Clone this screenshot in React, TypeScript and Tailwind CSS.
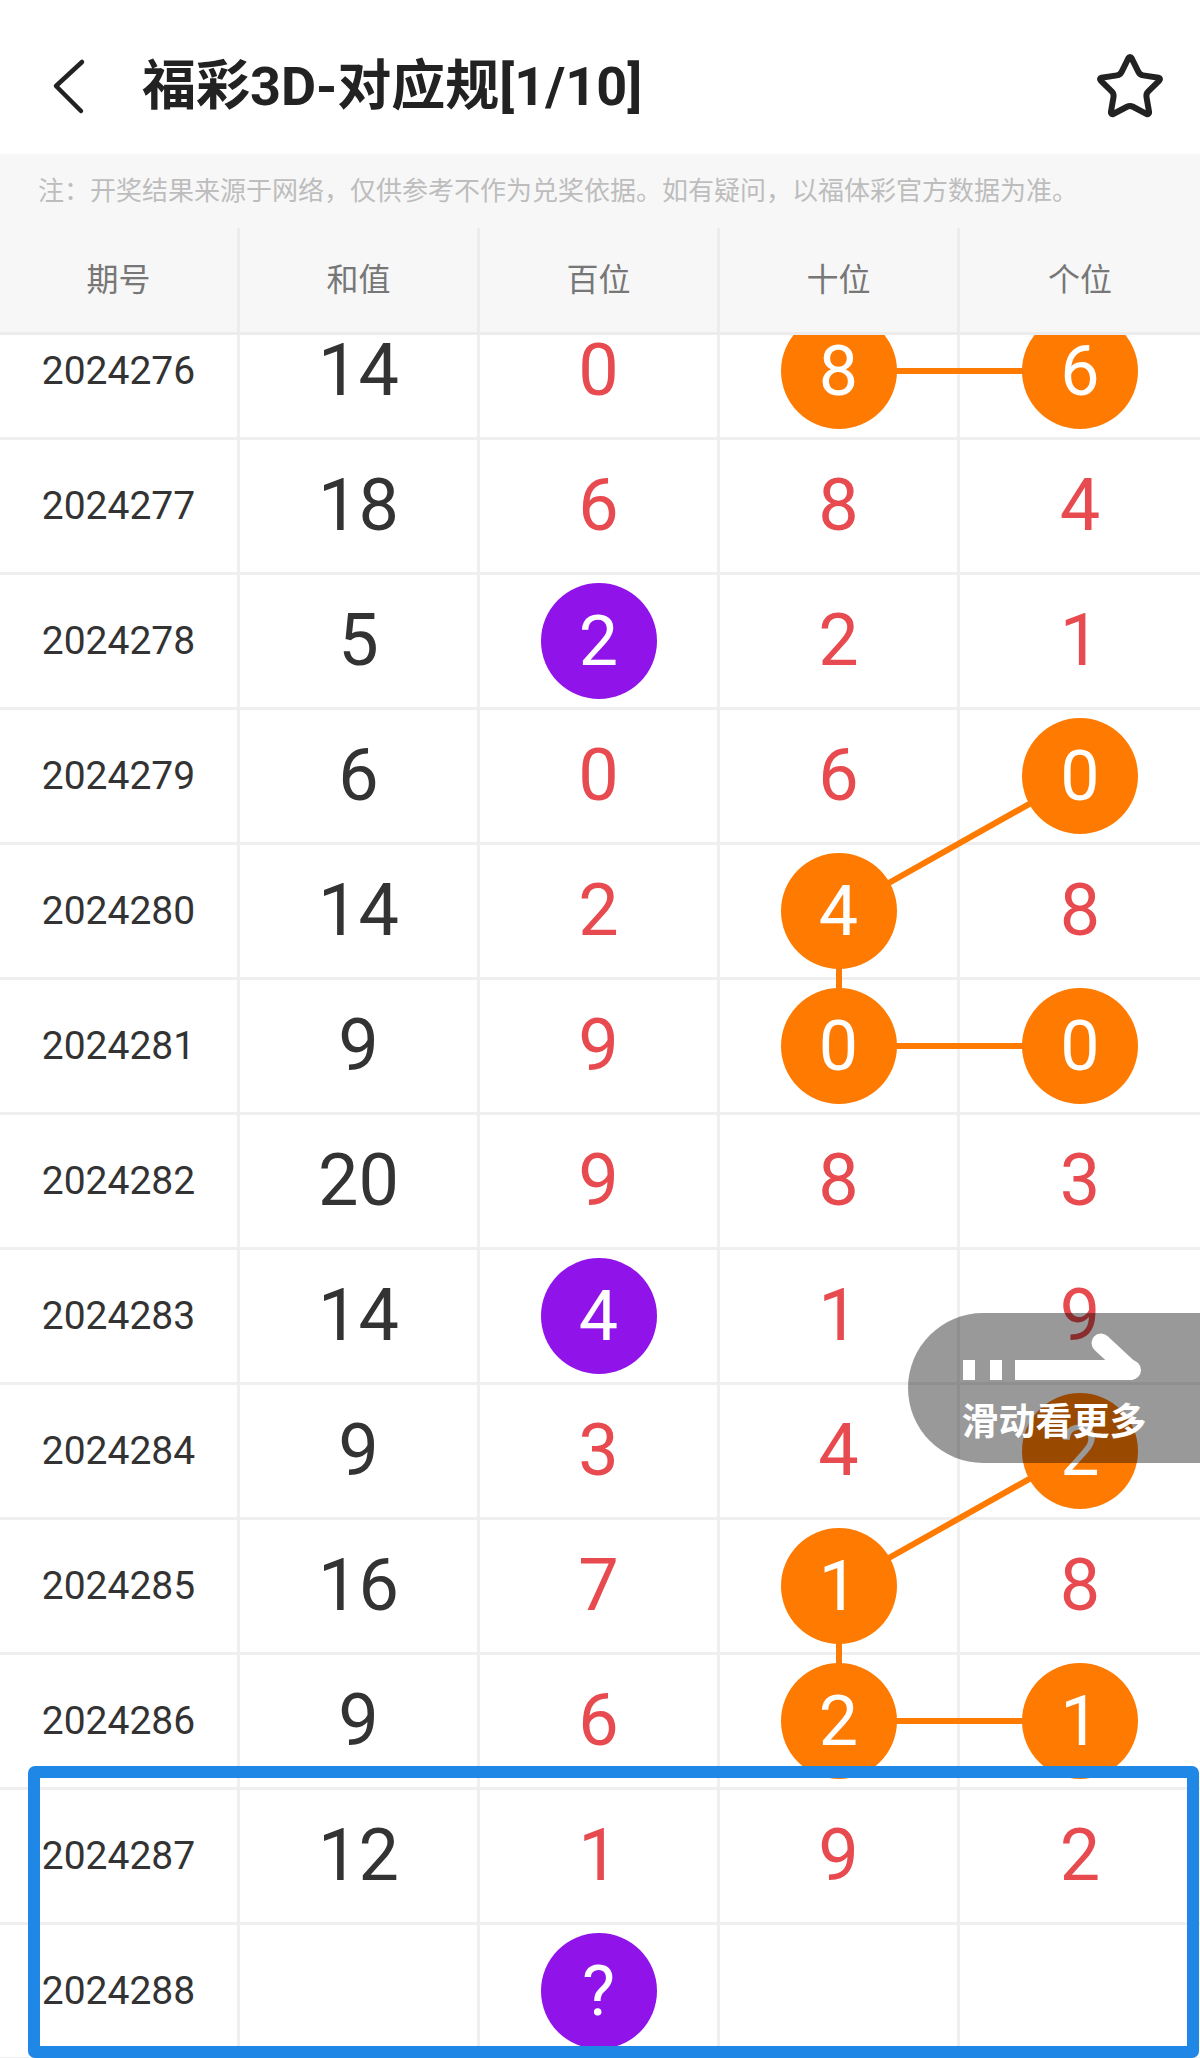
import React from 'react'

type Kind = 'r' | 'o' | 'p' | ''

interface Row {
  no: string
  sum: string
  digits: [string, Kind][]
}

const rows: Row[] = [
  { no: '2024276', sum: '14', digits: [['0', 'r'], ['8', 'o'], ['6', 'o']] },
  { no: '2024277', sum: '18', digits: [['6', 'r'], ['8', 'r'], ['4', 'r']] },
  { no: '2024278', sum: '5', digits: [['2', 'p'], ['2', 'r'], ['1', 'r']] },
  { no: '2024279', sum: '6', digits: [['0', 'r'], ['6', 'r'], ['0', 'o']] },
  { no: '2024280', sum: '14', digits: [['2', 'r'], ['4', 'o'], ['8', 'r']] },
  { no: '2024281', sum: '9', digits: [['9', 'r'], ['0', 'o'], ['0', 'o']] },
  { no: '2024282', sum: '20', digits: [['9', 'r'], ['8', 'r'], ['3', 'r']] },
  { no: '2024283', sum: '14', digits: [['4', 'p'], ['1', 'r'], ['9', 'r']] },
  { no: '2024284', sum: '9', digits: [['3', 'r'], ['4', 'r'], ['2', 'o']] },
  { no: '2024285', sum: '16', digits: [['7', 'r'], ['1', 'o'], ['8', 'r']] },
  { no: '2024286', sum: '9', digits: [['6', 'r'], ['2', 'o'], ['1', 'o']] },
  { no: '2024287', sum: '12', digits: [['1', 'r'], ['9', 'r'], ['2', 'r']] },
  { no: '2024288', sum: '', digits: [['?', 'p'], ['', ''], ['', '']] },
]

// [row, col] pairs joined by the orange trend line
const links: [number, number, number, number][] = [
  [0, 3, 0, 4],
  [3, 4, 4, 3],
  [4, 3, 5, 3],
  [5, 3, 5, 4],
  [8, 4, 9, 3],
  [9, 3, 10, 3],
  [10, 3, 10, 4],
]

const ROW_H = 135
const COL_W = 240
const font = { fontFamily: 'Roboto, "Noto Sans CJK SC", sans-serif' }

function DigitCell({ value, kind }: { value: string; kind: Kind }) {
  if (kind === 'o' || kind === 'p') {
    return (
      <div
        className={
          'relative z-[2] flex h-[116px] w-[116px] items-center justify-center rounded-full text-[70px] leading-none text-white ' +
          (kind === 'o' ? 'bg-[#ff7a00]' : 'bg-[#9013ea]')
        }
      >
        {value}
      </div>
    )
  }
  return <span className="relative z-[2] text-[72px] leading-none text-[#e84b4f]">{value}</span>
}

function SwipeHint() {
  return (
    <div className="absolute right-0 top-[1313px] z-10 flex h-[150px] w-[292px] flex-col items-center justify-center gap-[20px] rounded-l-full bg-black/40">
      <svg width="188" height="50" viewBox="0 0 188 50" fill="#fff">
        <rect x="3" y="29" width="12" height="20" />
        <rect x="30" y="29" width="12" height="20" />
        <rect x="55" y="29" width="118" height="20" />
        <path d="M170 39 L141 12" stroke="#fff" strokeWidth="19" strokeLinecap="round" />
        <circle cx="171" cy="39" r="10" />
      </svg>
      <span className="text-[37px] font-bold leading-[1.2] text-white">滑动看更多</span>
    </div>
  )
}

export default function App() {
  const headers = ['期号', '和值', '百位', '十位', '个位']
  return (
    <div className="relative h-[2058px] w-[1200px] overflow-hidden bg-white" style={font}>
      {/* top bar */}
      <div className="flex h-[154px] items-center pt-[20px]">
        <svg className="ml-[50px]" width="40" height="60" viewBox="0 0 40 60" fill="none">
          <path d="M32 5 L6 29 L31 54" stroke="#222" strokeWidth="4.5" strokeLinecap="round" strokeLinejoin="round" />
        </svg>
        <h1 className="ml-[52px] text-[54px] font-bold leading-none text-[#222]">福彩3D-对应规[1/10]</h1>
        <svg className="ml-auto mr-[34px]" width="72" height="72" viewBox="0 0 24 24" fill="none" stroke="#222" strokeWidth="2" strokeLinejoin="round">
          <path d="M11.525 2.295a.53.53 0 0 1 .95 0l2.31 4.679a2.123 2.123 0 0 0 1.595 1.16l5.166.756a.53.53 0 0 1 .294.904l-3.736 3.638a2.123 2.123 0 0 0-.611 1.878l.882 5.14a.53.53 0 0 1-.771.56l-4.618-2.428a2.122 2.122 0 0 0-1.973 0L6.396 21.01a.53.53 0 0 1-.77-.56l.881-5.139a2.122 2.122 0 0 0-.611-1.879L2.16 9.795a.53.53 0 0 1 .294-.906l5.165-.755a2.122 2.122 0 0 0 1.597-1.16z" />
        </svg>
      </div>

      {/* notice */}
      <div className="flex h-[74px] items-center bg-[#f7f7f7] pl-[38px] text-[26px] leading-none text-[#bdbdbd]">
        注：开奖结果来源于网络，仅供参考不作为兑奖依据。如有疑问，以福体彩官方数据为准。
      </div>

      {/* table header */}
      <div className="grid h-[107px] grid-cols-5 border-b-[3px] border-[#ececec] bg-[#f7f7f7]">
        {headers.map((h, i) => (
          <div
            key={h}
            className={'flex items-center justify-center text-[32px] text-[#777] ' + (i < 4 ? 'border-r-[3px] border-[#ececec]' : '')}
          >
            {h}
          </div>
        ))}
      </div>

      {/* table body, scrolled a little */}
      <div className="relative z-0 h-[1723px] overflow-hidden">
        <div className="relative -mt-[30px]">
          {rows.map((r) => (
            <div key={r.no} className="grid h-[135px] grid-cols-5 border-b-[3px] border-[#efefef]">
              <div className="flex items-center justify-center border-r-[3px] border-[#efefef] text-[39px] leading-none text-[#333]">
                {r.no}
              </div>
              <div className="flex items-center justify-center border-r-[3px] border-[#efefef] text-[72px] leading-none text-[#333]">
                {r.sum}
              </div>
              {r.digits.map(([v, k], i) => (
                <div
                  key={i}
                  className={'flex items-center justify-center ' + (i < 2 ? 'border-r-[3px] border-[#efefef]' : '')}
                >
                  <DigitCell value={v} kind={k} />
                </div>
              ))}
            </div>
          ))}
          <svg className="pointer-events-none absolute left-0 top-0 z-[1]" width="1200" height={ROW_H * rows.length}>
            {links.map(([r1, c1, r2, c2], i) => (
              <line
                key={i}
                x1={c1 * COL_W + 119}
                y1={r1 * ROW_H + 66}
                x2={c2 * COL_W + 119}
                y2={r2 * ROW_H + 66}
                stroke="#ff7a00"
                strokeWidth="6"
              />
            ))}
          </svg>
        </div>
      </div>

      <SwipeHint />

      {/* highlighted last rows */}
      <div className="absolute left-[28px] top-[1766px] z-10 h-[292px] w-[1171px] rounded-[7px] border-[12px] border-[#1f88e6]" />
    </div>
  )
}
